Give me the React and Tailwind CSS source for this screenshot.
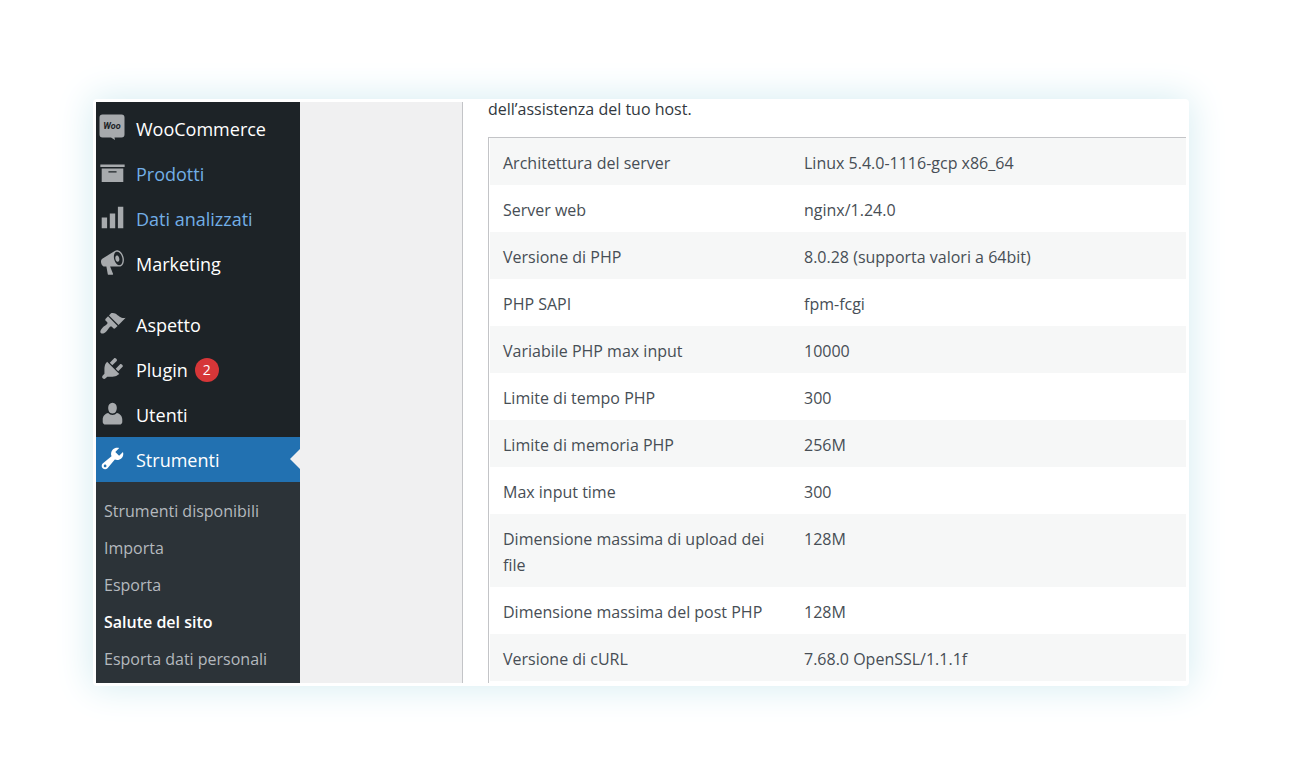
const icons = {
  products: "M19 4v2H1V4h18zM2 7h16v10H2V7zm11 3V9H7v1h6z",
  analytics: "M18 18V2h-4v16h4zm-6 0V7H8v11h4zm-6 0v-8H2v8h4z",
  marketing:
    "M18.15 5.94c.46 1.62.38 3.22-.02 4.48-.42 1.28-1.26 2.18-2.3 2.48-.16.06-.26.06-.4.06-.06.02-.12.02-.18.02-.06.02-.14.02-.22.02h-6.8l2.22 5.5c.02.14-.06.26-.14.34-.08.1-.24.16-.34.16H6.95c-.1 0-.26-.06-.34-.16-.08-.08-.16-.2-.14-.34l-1-5.5H4.25l-.02-.02c-.5.06-1.08-.18-1.54-.62s-.88-1.08-1.06-1.88c-.24-.8-.2-1.56-.02-2.2.18-.62.58-1.08 1.06-1.3l.02-.02 9-5.4c.1-.06.18-.1.24-.16.06-.04.14-.08.24-.12.16-.08.28-.12.5-.18 1.04-.3 2.24.1 3.22.98s1.84 2.24 2.26 3.86zm-2.58 5.98h-.02c.4-.1.74-.34 1.04-.7.58-.7.86-1.76.86-3.04 0-.64-.1-1.3-.28-1.98-.34-1.36-1.02-2.5-1.78-3.24s-1.68-1.1-2.46-.88c-.82.22-1.4.96-1.7 2-.32 1.04-.28 2.36.06 3.72.38 1.36 1 2.5 1.8 3.24.78.74 1.62 1.1 2.48.88zm-2.54-7.08c.22-.04.42-.02.62.04.38.16.76.48 1.02 1s.42 1.2.42 1.78c0 .3-.04.56-.12.8-.18.48-.44.84-.86.94-.34.1-.8-.06-1.14-.4s-.64-.86-.78-1.5c-.18-.62-.12-1.24.02-1.72s.48-.84.82-.94z",
  appearance:
    "M14.48 11.06L7.41 3.99l1.5-1.5c.5-.56 2.3-.47 3.51.32 1.21.8 1.43 1.28 2.91 2.1 1.18.64 2.45 1.26 4.45.85zm-.71.71L6.7 4.7 4.93 6.47c-.39.39-.39 1.02 0 1.41l1.06 1.06c.39.39.39 1.03 0 1.42-.6.6-1.43 1.11-2.21 1.69-.35.26-.7.53-1.01.84C1.43 14.23.4 16.08 1.4 17.07c.99 1 2.84-.03 4.18-1.36.31-.31.58-.66.85-1.02.57-.78 1.08-1.61 1.69-2.21.39-.39 1.02-.39 1.41 0l1.06 1.06c.39.39 1.02.39 1.41 0z",
  plugins:
    "M13.11 4.36L9.87 7.6 8 5.73l3.24-3.24c.35-.34 1.05-.2 1.56.32.52.51.66 1.21.31 1.55zm-8 1.77l.91-1.12 9.01 9.01-1.19.84c-.71.71-2.63 1.16-3.82 1.16H6.14L4.9 17.26c-.59.59-1.54.59-2.12 0-.59-.58-.59-1.53 0-2.12l1.24-1.24v-3.88c0-1.13.4-3.19 1.09-3.89zm7.26 3.97l3.24-3.24c.34-.35 1.04-.21 1.55.31.52.51.66 1.21.31 1.55l-3.24 3.25z",
  users:
    "M10 10c-2.3 0-3.2-2.1-3.2-4.2C6.8 3.6 8 2 10 2s3.2 1.6 3.2 3.8c0 2.1-.9 4.2-3.2 4.2zm0 1.1c1.3 0 2.4-.5 3.2-1.4 2.3.3 4.04 2.4 4.04 4.83v1.7c0 1.1-.9 1.92-2 1.92H4.76c-1.1 0-2-.82-2-1.92v-1.7c0-2.43 1.74-4.53 4.04-4.83.8.9 1.9 1.4 3.2 1.4z",
  tools:
    "M16.68 9.77c-1.34 1.34-3.3 1.67-4.95.99l-5.41 6.52c-.99.99-2.59.99-3.58 0s-.99-2.59 0-3.57l6.52-5.42c-.68-1.65-.35-3.61.99-4.95 1.28-1.28 3.12-1.62 4.72-1.06l-2.89 2.89 2.82 2.82 2.86-2.87c.53 1.58.18 3.39-1.08 4.65zM3.81 16.21c.4.39 1.04.39 1.43 0 .4-.4.4-1.04 0-1.43-.39-.4-1.03-.4-1.43 0-.39.39-.39 1.03 0 1.43z",
};

const mainMenu = [
  { label: "WooCommerce", icon: "woo" },
  { label: "Prodotti", icon: "products", highlighted: true },
  { label: "Dati analizzati", icon: "analytics", highlighted: true },
  { label: "Marketing", icon: "marketing" },
];

const adminMenu = [
  { label: "Aspetto", icon: "appearance" },
  { label: "Plugin", icon: "plugins", count: 2 },
  { label: "Utenti", icon: "users" },
  { label: "Strumenti", icon: "tools", current: true },
];

const toolsMenu = [
  { label: "Strumenti disponibili" },
  { label: "Importa" },
  { label: "Esporta" },
  { label: "Salute del sito", current: true },
  { label: "Esporta dati personali" },
];

const serverInfo = [
  ["Architettura del server", "Linux 5.4.0-1116-gcp x86_64"],
  ["Server web", "nginx/1.24.0"],
  ["Versione di PHP", "8.0.28 (supporta valori a 64bit)"],
  ["PHP SAPI", "fpm-fcgi"],
  ["Variabile PHP max input", "10000"],
  ["Limite di tempo PHP", "300"],
  ["Limite di memoria PHP", "256M"],
  ["Max input time", "300"],
  ["Dimensione massima di upload dei file", "128M"],
  ["Dimensione massima del post PHP", "128M"],
  ["Versione di cURL", "7.68.0 OpenSSL/1.1.1f"],
];

function WooIcon() {
  return (
    <svg viewBox="0 0 27 27" className="size-[27px] shrink-0" aria-hidden="true">
      <path
        d="M3.5.5h19a3 3 0 0 1 3 3v17a3 3 0 0 1-3 3h-7l.5 2.5-4-2.5H3.5a3 3 0 0 1-3-3v-17a3 3 0 0 1 3-3z"
        fill="#a7aaad"
      />
      <text
        x="13"
        y="15"
        textAnchor="middle"
        fontFamily="Roboto, sans-serif"
        fontSize="9"
        fontWeight="700"
        fontStyle="italic"
        fill="#1d2327"
      >
        Woo
      </text>
    </svg>
  );
}

function MenuIcon({ name, current }) {
  if (name === "woo") {
    return <WooIcon />;
  }

  return (
    <svg
      viewBox="0 0 20 20"
      className={`size-[27px] shrink-0 ${current ? "fill-white" : "fill-[#a7aaad]"}`}
      aria-hidden="true"
    >
      <path d={icons[name]} />
    </svg>
  );
}

function MenuItem({ item }) {
  return (
    <li className={item.current ? "relative bg-[#2271b1]" : ""}>
      <a
        href="#"
        className={`flex h-[45px] items-center gap-[10px] pl-[3px] text-lg ${
          item.highlighted ? "text-[#72aee6]" : "text-white"
        }`}
      >
        <span className="pb-[2px]">
          <MenuIcon name={item.icon} current={item.current} />
        </span>
        <span>{item.label}</span>
        {item.count && (
          <span className="-ml-[3px] flex size-6 items-center justify-center rounded-full bg-[#d63638] text-sm">
            {item.count}
          </span>
        )}
      </a>
      {item.current && (
        <span className="absolute top-3 right-0 border-y-10 border-r-10 border-y-transparent border-r-[#f0f0f1]" />
      )}
    </li>
  );
}

function SideBar() {
  return (
    <nav className="flex w-[204px] shrink-0 flex-col bg-[#1d2327] pt-1">
      <ul>
        {mainMenu.map((item) => (
          <MenuItem key={item.label} item={item} />
        ))}
      </ul>
      <ul className="mt-4">
        {adminMenu.map((item) => (
          <MenuItem key={item.label} item={item} />
        ))}
      </ul>
      <ul className="grow bg-[#2c3338] pt-[10px] pb-1">
        {toolsMenu.map((item) => (
          <li key={item.label}>
            <a
              href="#"
              className={`flex h-[37px] items-center pl-2 text-base ${
                item.current ? "font-semibold text-white" : "text-[#b4b9be]"
              }`}
            >
              {item.label}
            </a>
          </li>
        ))}
      </ul>
    </nav>
  );
}

function ServerTable() {
  return (
    <div className="grow border-t border-l border-[#c3c4c7] pb-[2px] pl-px">
      <table className="w-full table-fixed border-collapse text-left leading-[26px] text-[#474e55]">
        <colgroup>
          <col className="w-[301px]" />
          <col />
        </colgroup>
        <tbody>
          {serverInfo.map(([label, value]) => (
            <tr key={label} className="align-top odd:bg-[#f6f7f7]">
              <th scope="row" className="px-[13px] pt-3 pb-[9px] font-normal">
                {label}
              </th>
              <td className="px-[13px] pt-3 pb-[9px]">{value}</td>
            </tr>
          ))}
        </tbody>
      </table>
    </div>
  );
}

export default function App() {
  return (
    <div className="min-h-screen bg-white pt-[99px] pr-[111px] pb-[92px] pl-[93px] font-['Open_Sans',sans-serif]">
      <div className="rounded bg-white p-[3px] shadow-[0_0_36px_2px_#d6edf2]">
        <div className="flex">
          <SideBar />
          <div className="w-[163px] shrink-0 border-r border-[#c3c4c7] bg-[#f0f0f1]" />
          <main className="flex min-w-0 grow flex-col pl-[25px]">
            <p className="mb-[21px] leading-[14px] text-[#32383e]">
              dell’assistenza del tuo host.
            </p>
            <ServerTable />
          </main>
        </div>
      </div>
    </div>
  );
}
